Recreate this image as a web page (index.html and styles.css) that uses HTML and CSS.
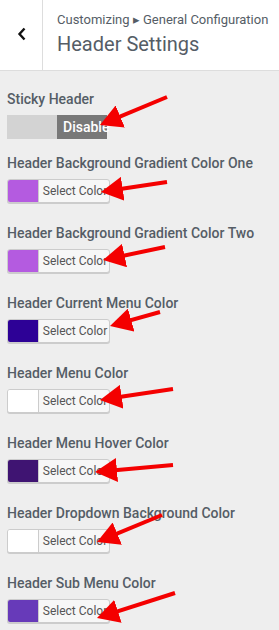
FILE: index.html
```html
<!DOCTYPE html>
<html lang="en">
<head>
    <meta charset="UTF-8">
    <meta name="viewport" content="width=device-width, initial-scale=1.0">
    <title>Header Settings</title>
    <link rel="stylesheet" href="styles.css">
</head>
<body>
    <div class="panel">
        <div class="panel-header">
            <button class="back-btn" type="button" aria-label="Back">
                <svg width="10" height="14" viewBox="0 0 10 14">
                    <polyline points="7.5,1.5 2.5,7 7.5,12.5" fill="none" stroke="#111" stroke-width="2.4"/>
                </svg>
            </button>
            <div class="panel-title">
                <span class="crumb">Customizing &#9656; General Configuration</span>
                <h1>Header Settings</h1>
            </div>
        </div>

        <div class="controls">
            <div class="control control-toggle">
                <label>Sticky Header</label>
                <div class="toggle">
                    <span class="toggle-off"></span>
                    <span class="toggle-on">Disable</span>
                </div>
            </div>

            <div class="control">
                <label>Header Background Gradient Color One</label>
                <button class="color-btn" type="button"><span class="swatch" style="background:#b45be0"></span><span class="color-text">Select Color</span></button>
            </div>

            <div class="control">
                <label>Header Background Gradient Color Two</label>
                <button class="color-btn" type="button"><span class="swatch" style="background:#b45be0"></span><span class="color-text">Select Color</span></button>
            </div>

            <div class="control">
                <label>Header Current Menu Color</label>
                <button class="color-btn" type="button"><span class="swatch" style="background:#2d0196"></span><span class="color-text">Select Color</span></button>
            </div>

            <div class="control">
                <label>Header Menu Color</label>
                <button class="color-btn" type="button"><span class="swatch" style="background:#ffffff"></span><span class="color-text">Select Color</span></button>
            </div>

            <div class="control">
                <label>Header Menu Hover Color</label>
                <button class="color-btn" type="button"><span class="swatch" style="background:#3f1472"></span><span class="color-text">Select Color</span></button>
            </div>

            <div class="control">
                <label>Header Dropdown Background Color</label>
                <button class="color-btn" type="button"><span class="swatch" style="background:#ffffff"></span><span class="color-text">Select Color</span></button>
            </div>

            <div class="control">
                <label>Header Sub Menu Color</label>
                <button class="color-btn" type="button"><span class="swatch" style="background:#673ab9"></span><span class="color-text">Select Color</span></button>
            </div>
        </div>

        <!-- annotation arrows drawn over the screenshot -->
        <svg class="arrows" width="279" height="630" viewBox="0 0 279 630">
            <defs>
                <marker id="head" viewBox="0 0 22 24" refX="16" refY="12" markerWidth="22" markerHeight="24" markerUnits="userSpaceOnUse" orient="auto">
                    <path d="M0,0 L22,12 L0,24 z" fill="#f40000"/>
                </marker>
            </defs>
            <g stroke="#f40000" stroke-width="4" marker-end="url(#head)">
                <line x1="167" y1="97" x2="105.5" y2="122.7"/>
                <line x1="167" y1="182" x2="106.9" y2="191.1"/>
                <line x1="165" y1="247" x2="108.9" y2="258.8"/>
                <line x1="160" y1="312" x2="115.8" y2="324.4"/>
                <line x1="173" y1="389" x2="105.9" y2="399.1"/>
                <line x1="173" y1="465" x2="101" y2="471.5"/>
                <line x1="162" y1="515" x2="102.5" y2="539.7"/>
                <line x1="175" y1="593" x2="102.7" y2="616.2"/>
            </g>
        </svg>
    </div>
</body>
</html>
```

FILE: styles.css
```css
body {
    margin: 0;
    font-family: Roboto, "Liberation Sans", sans-serif;
    background-color: #eeeeee;
    color: #555d66;
}
.panel {
    position: relative;
    width: 279px;
    height: 630px;
    overflow: hidden;
}
.panel-header {
    display: flex;
    height: 70px;
    background-color: #fff;
    border-bottom: 1px solid #dddddd;
}
.back-btn {
    width: 43px;
    padding: 0;
    border: none;
    border-right: 1px solid #dddddd;
    background: #fff;
    display: flex;
    align-items: center;
    justify-content: center;
    padding-left: 1px;
    padding-bottom: 2px;
}
.panel-title {
    padding: 11px 0 0 14px;
}
.crumb {
    display: block;
    font-size: 13px;
    line-height: 18px;
}
.panel-title h1 {
    margin: 2px 0 0;
    font-size: 20px;
    font-weight: 400;
    line-height: 26px;
}
.controls {
    padding: 18px 7px 0;
}
.control {
    margin-bottom: 20px;
}
.control-toggle {
    margin-bottom: 14px;
}
.control label {
    display: block;
    font-size: 14px;
    font-weight: 500;
    line-height: 20px;
    margin-bottom: 6px;
    white-space: nowrap;
}
.toggle {
    display: flex;
    width: 100px;
    height: 24px;
}
.toggle-off {
    width: 50px;
    background-color: #d3d3d3;
}
.toggle-on {
    width: 44px;
    padding-left: 6px;
    background-color: #787878;
    color: #fff;
    font-size: 14px;
    font-weight: 500;
    line-height: 24px;
    white-space: nowrap;
}
.color-btn {
    display: flex;
    align-items: stretch;
    width: 103px;
    height: 24px;
    padding: 0;
    border: 1px solid #cccccc;
    border-radius: 3px;
    background-color: #f7f7f7;
    box-shadow: 0 1px 0 #cccccc;
    overflow: hidden;
    font-family: inherit;
}
.swatch {
    width: 30px;
    border-right: 1px solid #cccccc;
}
.color-text {
    flex: 1;
    padding-left: 2px;
    font-size: 12px;
    line-height: 22px;
    color: #555555;
    text-align: center;
}
.arrows {
    position: absolute;
    top: 0;
    left: 0;
}
```
